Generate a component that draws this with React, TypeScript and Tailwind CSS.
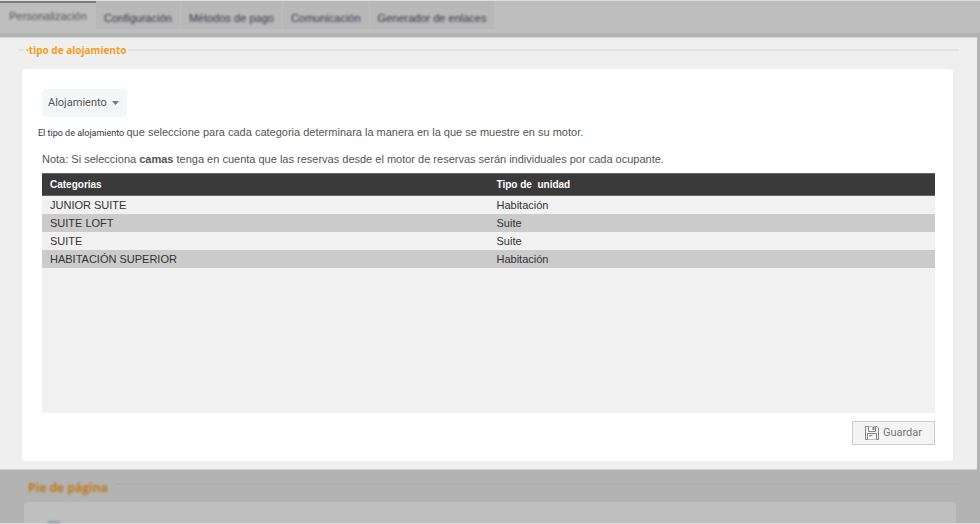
const tabs = ["Configuración", "Métodos de pago", "Comunicación", "Generador de enlaces"];

const rows = [
	{ category: "JUNIOR SUITE", unit: "Habitación" },
	{ category: "SUITE LOFT", unit: "Suite" },
	{ category: "SUITE", unit: "Suite" },
	{ category: "HABITACIÓN SUPERIOR", unit: "Habitación" },
];

const SaveIcon = () => (
	<svg width="14" height="14" viewBox="0 0 14 14" fill="none" stroke="#858585" aria-hidden="true">
		<path d="M0.5 0.5H12L13.5 2V13.5H0.5Z" fill="#f4f4f4" />
		<path d="M3.5 0.5V5.5H10.5V0.5" fill="#fafafa" />
		<path d="M8.5 1V4" strokeWidth="2" />
		<path d="M2.5 13.5V7.5H11.5V13.5" fill="#fafafa" />
		<path d="M4.5 9.5H7.5M4.5 10.5H5.5" />
	</svg>
);

const Tabs = () => (
	<nav className="flex h-9 items-start border-b-4 border-[#b2b2b2] bg-[#bebebe] text-[11px] text-[#34344a]">
		<button className="h-8 w-24 border-t-2 border-[#7c7c7c] pb-1 text-[#555555]">
			<span className="blur-[1px]">Personalización</span>
		</button>
		<div className="flex gap-px">
			{tabs.map((tab) => (
				<button key={tab} className="h-7 bg-[#b8b8b8] px-2 pt-1.5">
					<span className="blur-[1px]">{tab}</span>
				</button>
			))}
		</div>
	</nav>
);

const CategoryTable = () => (
	<div className="h-60 bg-[#f1f1f1]">
		<table className="w-full table-fixed border-collapse text-left text-[11px] text-[#333333]">
			<thead>
				<tr className="h-[22px] border-y border-[#666666] bg-[#3a3a3a] text-[10px] text-white">
					<th className="w-1/2 pl-2 font-bold">Categorias</th>
					<th className="pl-2 font-bold whitespace-pre">Tipo de  unidad</th>
				</tr>
			</thead>
			<tbody>
				{rows.map((row) => (
					<tr key={row.category} className="h-[18px] even:bg-[#cbcbcb]">
						<td className="pt-px pl-2">{row.category}</td>
						<td className="pt-px pl-2">{row.unit}</td>
					</tr>
				))}
			</tbody>
		</table>
	</div>
);

const App = () => {
	return (
		<div className="flex min-h-screen flex-col border-y border-[#dddddd] bg-[#b3b3b3] font-['Liberation_Sans',Arial,sans-serif]">
			<Tabs />

			<main className="mr-[3px] border-y border-[#d2d2d2] bg-[#efefef] px-[18px] pb-2">
				<fieldset className="border-t-2 border-[#e2e2e2]">
					<legend className="ml-1.5 px-0.5 font-['Open_Sans',sans-serif] text-[10px] leading-6 font-bold text-[#f0a020]">
						<span aria-hidden="true">·</span>tipo de alojamiento
					</legend>
					<div className="mt-[7px] mr-1.5 ml-1 rounded bg-white pt-5 pr-[18px] pb-4 pl-5 text-[#555555]">
						<div className="relative w-fit">
							<select
								aria-label="Tipo de alojamiento"
								className="block h-7 w-[85px] appearance-none rounded-sm bg-[#f3f7f8] pl-1.5 font-[Roboto,sans-serif] text-[11px]"
							>
								<option>Alojamiento</option>
								<option>Camas</option>
							</select>
							<svg className="pointer-events-none absolute top-3 right-2" width="7" height="4" viewBox="0 0 7 4">
								<path d="M0 0H7L3.5 4Z" fill="#777777" />
							</svg>
						</div>
						<p className="-ml-1 pt-[7px] text-[11px] leading-4">
							<span className="font-[Roboto,sans-serif] text-[9px] text-[#333344]">
								El tipo de alojamiento{" "}
							</span>
							que seleccione para cada categoria determinara la manera en la que se muestre en su motor.
						</p>
						<p className="pt-2.5 pb-1.5 text-[11px] leading-4">
							Nota: Si selecciona <strong>camas</strong> tenga en cuenta que las reservas desde el motor
							de reservas serán individuales por cada ocupante.
						</p>
						<CategoryTable />
						<div className="flex justify-end pt-2">
							<button className="flex h-6 items-center gap-1 border border-[#cccccc] bg-[#f4f4f4] px-3 font-[Roboto,sans-serif] text-[11px] text-[#777777]">
								<SaveIcon />
								Guardar
							</button>
						</div>
					</div>
				</fieldset>
			</main>

			<section className="flex flex-1 flex-col px-5 pt-2">
				<div className="flex items-center gap-2">
					<h2 className="pl-2 font-['Open_Sans',sans-serif] text-xs leading-5 font-bold text-[#bf7a1c] blur-[1px]">
						Pie de página
					</h2>
					<div className="mb-2 h-0.5 flex-1 bg-[#adadad]"></div>
				</div>
				<div className="mt-1 mr-1 ml-1 flex flex-1 items-end rounded-t bg-[#bfbfbf] pl-6">
					<div className="h-0.5 w-3 bg-[#8e9dad] blur-[1px]"></div>
				</div>
			</section>
		</div>
	);
};

export default App;
